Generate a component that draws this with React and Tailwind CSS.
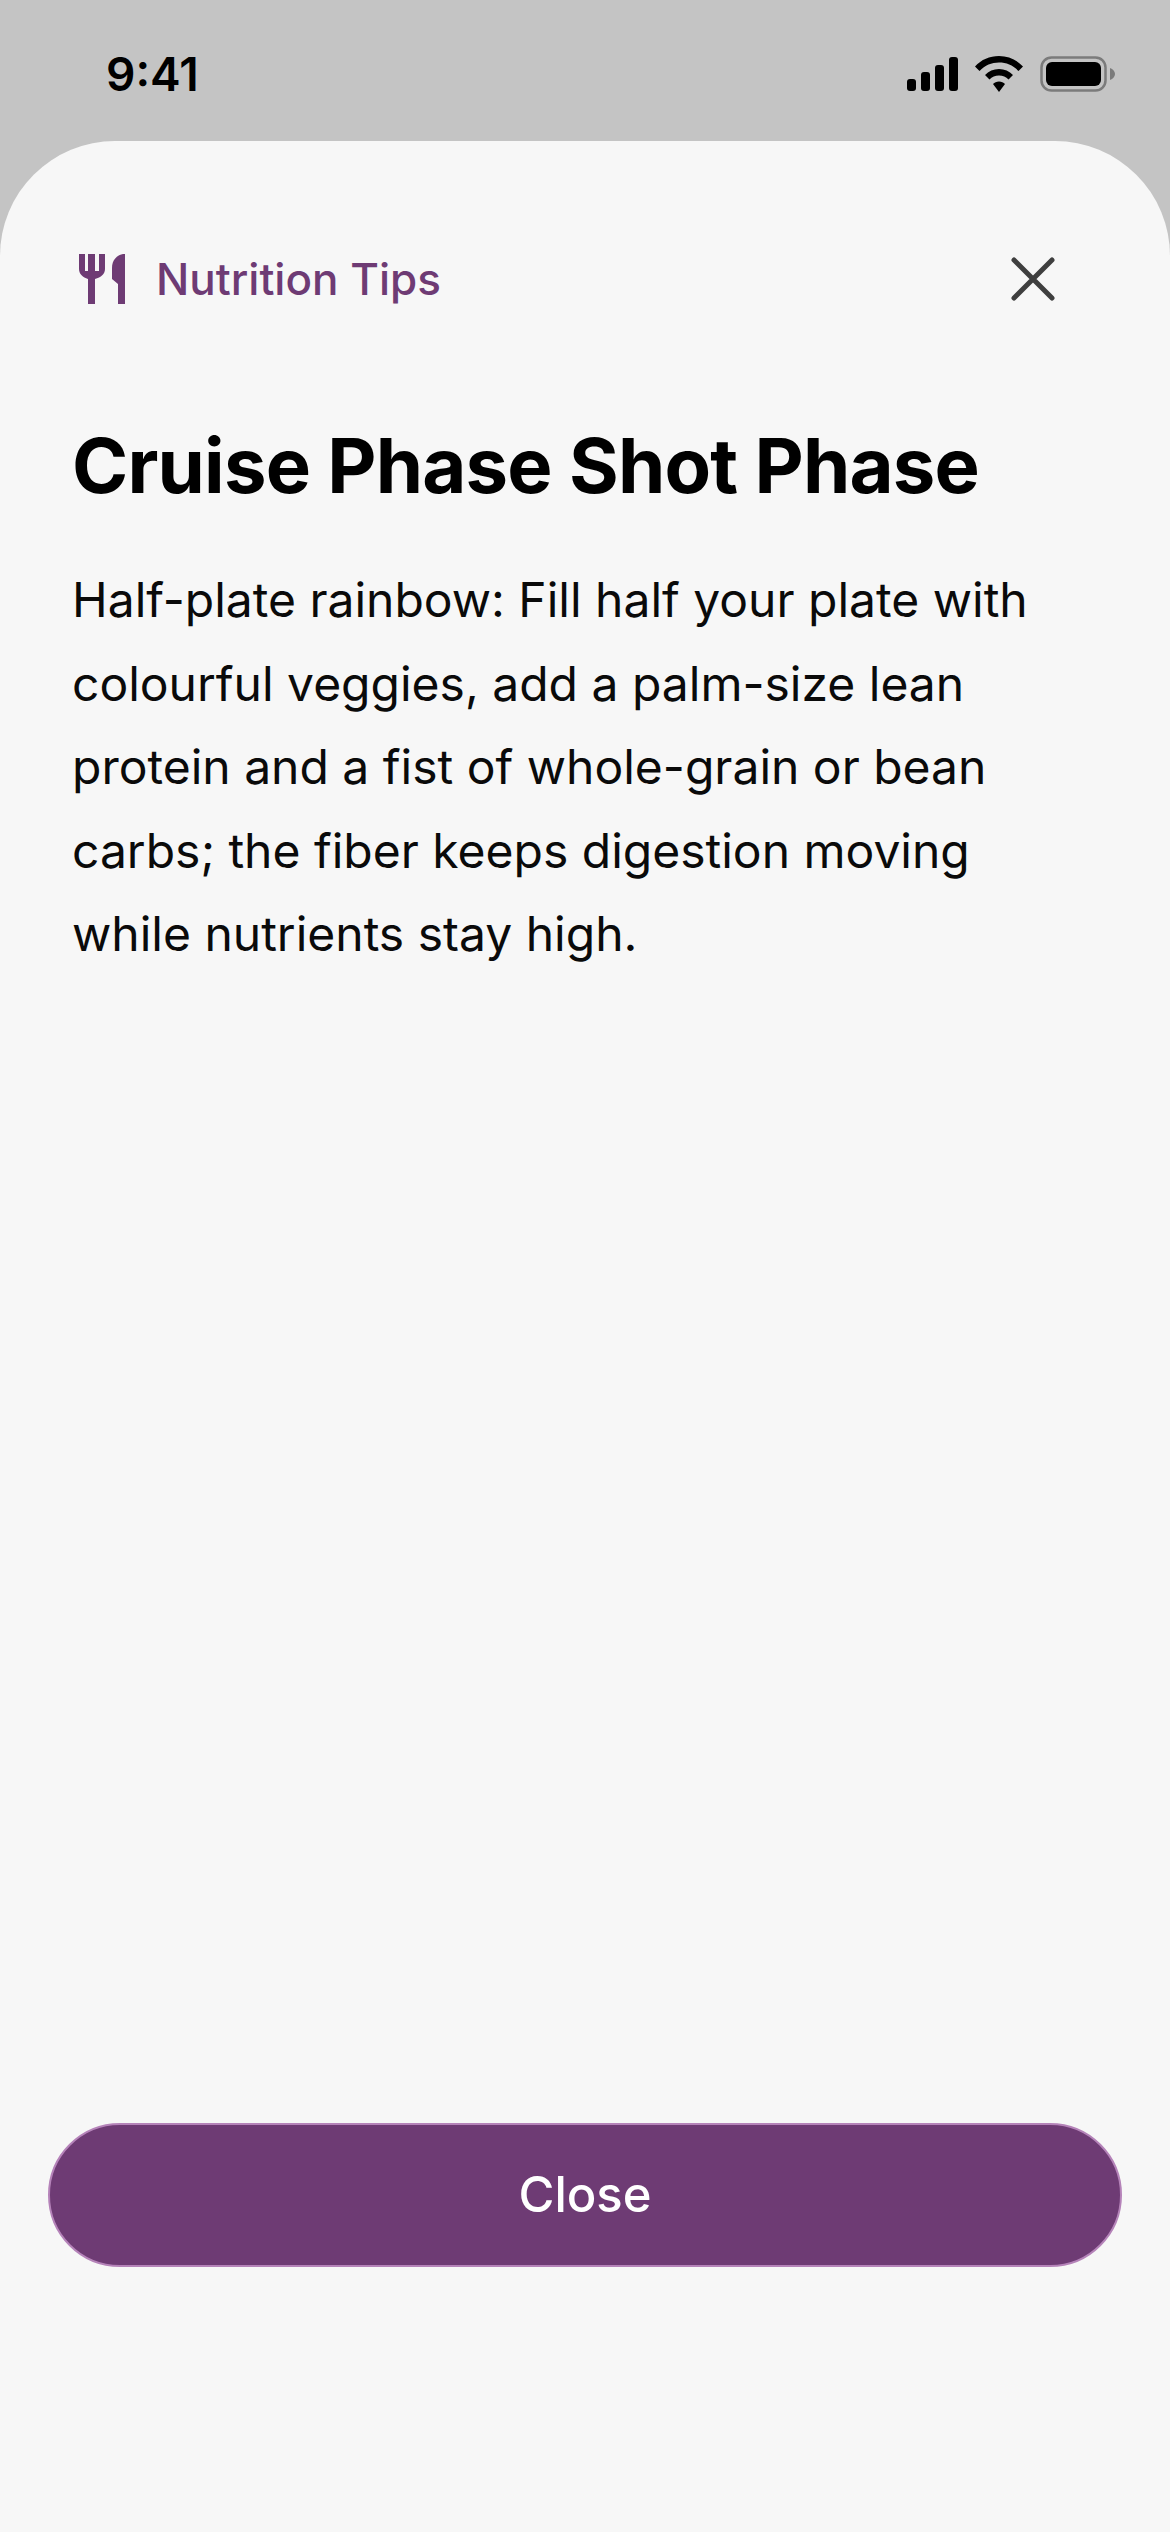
function StatusIcons() {
  return (
    <div className="flex items-center gap-[17px]">
      <svg width="51" height="34" viewBox="0 0 51 34" fill="#000">
        <rect x="0" y="22" width="9" height="12" rx="3" />
        <rect x="14" y="15" width="9" height="19" rx="3" />
        <rect x="28" y="8" width="9" height="26" rx="3" />
        <rect x="42" y="0" width="9" height="34" rx="3" />
      </svg>
      <svg width="48" height="36" viewBox="0 0 48 36" fill="#000">
        <path d="M24 0C33.500 0 41.500 3.500 48 10.500L43.500 15C38 9.200 31.500 6.500 24 6.500C16.500 6.500 10 9.200 4.500 15L0 10.500C6.500 3.500 14.500 0 24 0Z" />
        <path d="M24 13C29.500 13 34.300 15 38 19L33.500 23.500C31 21 27.800 19.500 24 19.500C20.200 19.500 17 21 14.500 23.500L10 19C13.700 15 18.500 13 24 13Z" />
        <path d="M24 25.500C26.500 25.500 28.500 26.400 30 28L24 36L18 28C19.500 26.400 21.500 25.500 24 25.500Z" />
      </svg>
      <svg width="75" height="36" viewBox="0 0 75 36" fill="none">
        <rect x="1.500" y="1.500" width="64" height="33" rx="10" stroke="#7b7b7b" strokeWidth="2.500" />
        <rect x="6" y="6" width="55" height="24" rx="6" fill="#000" />
        <path d="M70 12C73 13 75 15.500 75 18C75 20.500 73 23 70 24Z" fill="#7b7b7b" />
      </svg>
    </div>
  );
}

function CutleryIcon() {
  return (
    <svg width="46" height="50" viewBox="0 0 46 50" fill="#6e3b74">
      <path d="M0 0H6V17H9V0H16V17H20V0H26V15C26 20 22 23.500 16 25V50H9V25C4 23.500 0 20 0 15Z" />
      <path d="M46 0V50H39V30L33 25V14C33 6 38 1 44 0Z" />
    </svg>
  );
}

export default function App() {
  return (
    <div className="flex h-[2532px] w-[1170px] flex-col bg-[#c4c4c4] font-['Inter',sans-serif]">
      <div className="flex h-[141px] items-start justify-between pl-[106px] pr-[55px] pt-[49px]">
        <span className="text-[46px] font-semibold leading-[50px] text-black">9:41</span>
        <div className="pt-[7px]">
          <StatusIcons />
        </div>
      </div>

      <div className="flex flex-1 flex-col rounded-t-[115px] bg-[#f7f7f7] px-[48px]">
        <div className="flex items-center justify-between pl-[31px] pr-[67px] pt-[113px]">
          <div className="flex items-center gap-[31px]">
            <CutleryIcon />
            <span className="text-[44px] font-medium leading-[50px] text-[#6e3b74]">Nutrition Tips</span>
          </div>
          <svg width="44" height="44" viewBox="0 0 44 44" fill="none" stroke="#3f3f3f" strokeWidth="5" strokeLinecap="round">
            <path d="M3 3L41 41M41 3L3 41" />
          </svg>
        </div>

        <h1 className="mt-[111px] pl-[24px] text-[76px] font-bold leading-[100px] tracking-[-0.8px] text-black">Cruise Phase Shot Phase</h1>
        <p className="mt-[43px] pl-[24px] pr-[60px] text-[48px] leading-[83.6px] text-[#0a0a0a]">
          Half-plate rainbow: Fill half your plate with colourful veggies, add a palm-size lean protein and a fist of whole-grain or bean carbs; the fiber keeps digestion moving while nutrients stay high.
        </p>

        <button className="mt-auto mb-[265px] flex h-[144px] items-center justify-center rounded-full border-2 border-[#b583b9] bg-[#6e3b74] text-[49px] font-medium text-white">
          Close
        </button>
      </div>
    </div>
  );
}
